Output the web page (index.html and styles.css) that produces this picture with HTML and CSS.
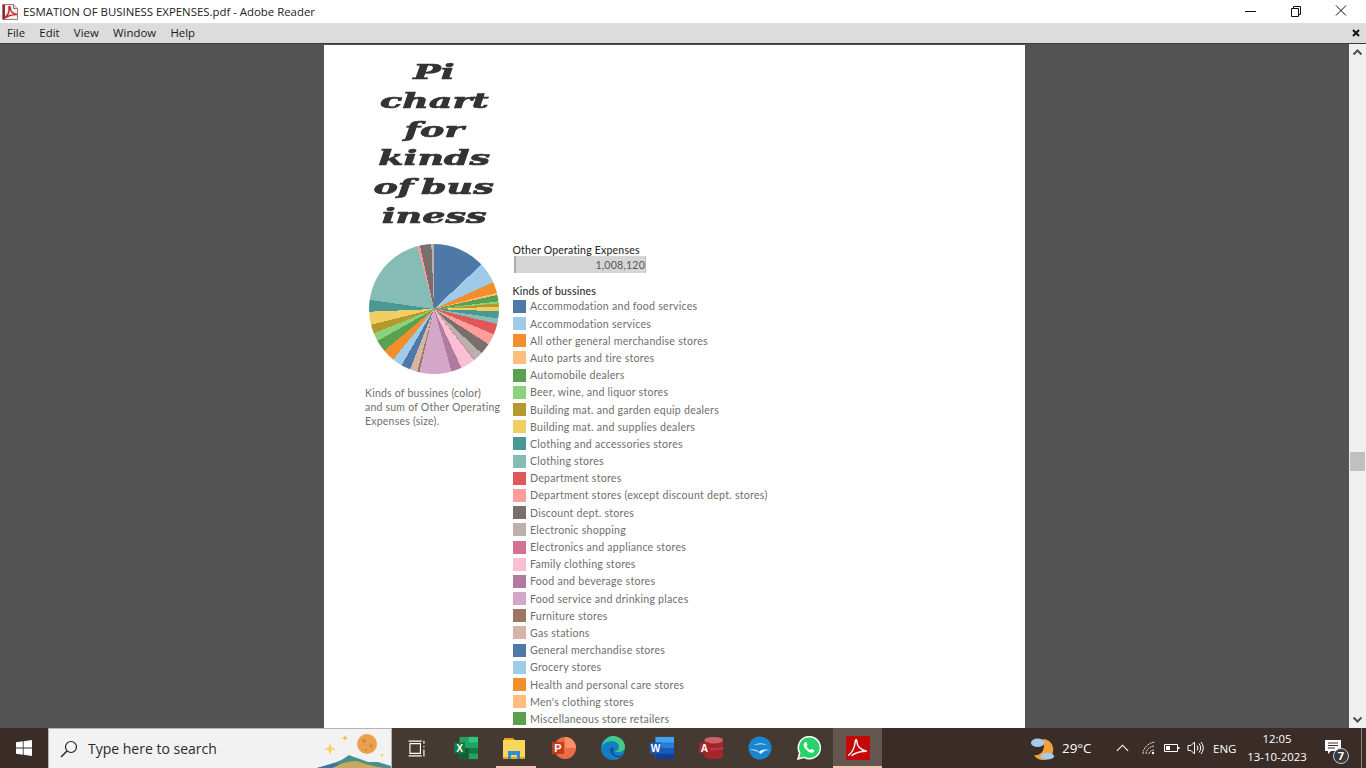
FILE: index.html
```html
<!DOCTYPE html>
<html lang="en">
<head>
<meta charset="utf-8">
<title>ESMATION OF BUSINESS EXPENSES.pdf - Adobe Reader</title>
<link rel="stylesheet" href="styles.css">
</head>
<body>
<div class="app">
  <header class="titlebar">
    <div class="title-left">
      <svg class="pdf-icon" viewBox="0 0 16 16"><path d="M.5 .5h11l4 4v11H.5z" fill="#f6eded" stroke="#9a7676"/><path d="M11.500 .5v4h4" fill="#ddd" stroke="#9a7676"/><path d="M1 1h2v14H1z" fill="#8e2a2a"/><path d="M2.500 14c3.500-2.500 5-6.500 4.500-10.500-.2-1.500 1.200-1.500 1.200 0 0 3.500 2.500 6.500 6.800 7-4-.3-8.500 1-12.500 3.500z" fill="none" stroke="#c32a28" stroke-width="1.500"/></svg>
      <span class="title-text">ESMATION OF BUSINESS EXPENSES.pdf - Adobe Reader</span>
    </div>
    <div class="win-controls">
      <svg class="win-btn" viewBox="0 0 46 23"><path d="M17 11.500h11" stroke="#111" fill="none"/></svg>
      <svg class="win-btn" viewBox="0 0 46 23"><path d="M17.500 8.500h7v8h-7zM19.500 8.500v-2h7v8h-2" stroke="#111" fill="none"/></svg>
      <svg class="win-btn" viewBox="0 0 46 23"><path d="M16 5.500l10 10M26 5.500l-10 10" stroke="#111" fill="none"/></svg>
    </div>
  </header>
  <nav class="menubar">
    <div class="menu-items">
      <span>File</span><span>Edit</span><span>View</span><span>Window</span><span>Help</span>
    </div>
    <svg class="menu-close" viewBox="0 0 8 8"><path d="M1 1l6 6M7 1l-6 6" stroke="#111" stroke-width="2" fill="none"/></svg>
  </nav>
  <main class="workspace">
    <div class="viewer">
      <article class="page">
        <div class="left-col">
          <h1 class="chart-title"><span>Pi</span><span>chart</span><span>for</span><span>kinds</span><span>of bus</span><span>iness</span></h1>
          <div class="pie"></div>
          <p class="pie-note">Kinds of bussines (color)<br>and sum of Other Operating<br>Expenses (size).</p>
        </div>
        <div class="right-col">
          <h2 class="legend-head">Other Operating Expenses</h2>
          <div class="size-bar">1,008,120</div>
          <h2 class="legend-head second">Kinds of bussines</h2>
          <ul class="legend">
            <li><i class="c1"></i>Accommodation and food services</li>
            <li><i class="c2"></i>Accommodation services</li>
            <li><i class="c3"></i>All other general merchandise stores</li>
            <li><i class="c4"></i>Auto parts and tire stores</li>
            <li><i class="c5"></i>Automobile dealers</li>
            <li><i class="c6"></i>Beer, wine, and liquor stores</li>
            <li><i class="c7"></i>Building mat. and garden equip dealers</li>
            <li><i class="c8"></i>Building mat. and supplies dealers</li>
            <li><i class="c9"></i>Clothing and accessories stores</li>
            <li><i class="c10"></i>Clothing stores</li>
            <li><i class="c11"></i>Department stores</li>
            <li><i class="c12"></i>Department stores (except discount dept. stores)</li>
            <li><i class="c13"></i>Discount dept. stores</li>
            <li><i class="c14"></i>Electronic shopping</li>
            <li><i class="c15"></i>Electronics and appliance stores</li>
            <li><i class="c16"></i>Family clothing stores</li>
            <li><i class="c17"></i>Food and beverage stores</li>
            <li><i class="c18"></i>Food service and drinking places</li>
            <li><i class="c19"></i>Furniture stores</li>
            <li><i class="c20"></i>Gas stations</li>
            <li><i class="c1"></i>General merchandise stores</li>
            <li><i class="c2"></i>Grocery stores</li>
            <li><i class="c3"></i>Health and personal care stores</li>
            <li><i class="c4"></i>Men's clothing stores</li>
            <li><i class="c5"></i>Miscellaneous store retailers</li>
          </ul>
        </div>
      </article>
    </div>
    <aside class="scrollbar">
      <svg class="arrow" viewBox="0 0 17 17"><path d="M4.500 10.500l4-4 4 4" stroke="#505050" stroke-width="2" fill="none"/></svg>
      <div class="track"><div class="thumb"></div></div>
      <svg class="arrow" viewBox="0 0 17 17"><path d="M4.500 6.500l4 4 4-4" stroke="#505050" stroke-width="2" fill="none"/></svg>
    </aside>
  </main>
  <footer class="taskbar">
    <div class="start">
      <svg class="winlogo" viewBox="0 0 16 16"><path d="M0 2.300l6.800-1v6.300H0zM7.600 1.200L16 0v7.600H7.600zM0 8.400h6.800v6.300l-6.800-1zM7.600 8.400H16V16l-8.400-1.200z" fill="#fff"/></svg>
    </div>
    <div class="search">
      <svg class="search-icon" viewBox="0 0 18 18"><circle cx="11" cy="7" r="5.500" fill="none" stroke="#222" stroke-width="1.200"/><path d="M7 11l-6 6" stroke="#222" stroke-width="1.400"/></svg>
      <span class="search-text">Type here to search</span>
      <svg class="search-art" viewBox="0 0 75 40"><path d="M1 40C10 37 20 35 27 31L33 27L38 29L44 31L52 34L62 34L75 38V40z" fill="#4a8f8c"/><path d="M1 40C8 38 14 37 20 35L30 40z" fill="#3f6fa8"/><path d="M16 40C24 36 32 33 40 33C50 36 56 38 68 40z" fill="#c9a860"/><circle cx="51" cy="16" r="10" fill="#eca04e"/><circle cx="48" cy="13" r="2" fill="#d4873c"/><circle cx="55" cy="18" r="1.800" fill="#d4873c"/><circle cx="50" cy="22" r="1.300" fill="#d4873c"/><path d="M14 15l1.500 4.500 4.500 1.500-4.500 1.500-1.500 4.500-1.500-4.500-4.500-1.500 4.500-1.500z" fill="#f6d365"/><path d="M29 7l.9 2.100 2.100.9-2.100.9-.9 2.100-.9-2.100-2.100-.9 2.100-.9z" fill="#f6c14a"/><circle cx="66" cy="27" r="1.200" fill="#f6cf5a"/></svg>
    </div>
    <div class="tasks">
      <div class="task"><svg class="ticon tv" viewBox="0 0 24 24"><path d="M4.500 6.500h12v11h-12zM3 3.500h15M3 20.500h15M20.500 3v3.500M20.500 9v1.500M20.500 13v8" fill="none" stroke="#fff" stroke-width="1.300"/></svg></div>
      <div class="task"><svg class="ticon" viewBox="0 0 26 24"><path d="M6 0h20v24H6z" fill="#21a366"/><path d="M16 0h10v6H16z" fill="#33c481"/><path d="M16 12h10v6H16z" fill="#107c41"/><path d="M6 12h10v12H6z" fill="#185c37"/><path d="M0 6h12v12H0z" fill="#107c41"/><text class="tletter" x="6" y="16">X</text></svg></div>
      <div class="task open"><svg class="ticon" viewBox="0 0 24 22"><path d="M1 1h9l2 2h-11z" fill="#e8a317"/><path d="M0 3h22v19H0z" fill="#f9d65c"/><path d="M0 20h22v2H0z" fill="#e8a317"/><path d="M5 14h12v8h-3v-4H8v4H5z" fill="#2a8fd8"/></svg></div>
      <div class="task"><svg class="ticon" viewBox="0 0 24 22"><circle cx="13" cy="11" r="11" fill="#ed6c47"/><path d="M13 0a11 11 0 0 1 11 11H13z" fill="#ff8f6b"/><path d="M0 5h12v12H0z" fill="#c43e1c"/><text class="tletter" x="6" y="15">P</text></svg></div>
      <div class="task"><svg class="ticon" viewBox="0 0 24 24"><circle cx="12" cy="12" r="12" fill="#0f7fc6"/><path d="M1 10C3 3 8 0 12 0c7 0 12 5 12 11 0 3-3 5-7 5-2 0-3-.5-3-1 2 0 4-1 4-4 0-3-3-6-7-6-5 0-8 3-10 5z" fill="#43c88a"/><path d="M9 13c0 5 4 9 10 8l2-2c-5 2-8 0-9-3 0-2 0-3 1-4-2-1-4 0-4 1z" fill="#1c4a8c"/></svg></div>
      <div class="task"><svg class="ticon" viewBox="0 0 26 24"><path d="M6 0h20v24H6z" fill="#2b7cd3"/><path d="M6 0h20v6H6z" fill="#41a5ee"/><path d="M6 12h20v6H6z" fill="#185abd"/><path d="M6 18h20v6H6z" fill="#103f91"/><path d="M0 6h12v12H0z" fill="#185abd"/><text class="tletter" x="6" y="16">W</text></svg></div>
      <div class="task"><svg class="ticon" viewBox="0 0 26 24"><path d="M6 3c0-4 20-4 20 0v18c0 4-20 4-20 0z" fill="#a4262c"/><ellipse cx="16" cy="3.500" rx="10" ry="3.500" fill="#c8636a"/><path d="M6 11c5 2 15 2 20 0v2c-5 2-15 2-20 0z" fill="#c43a43"/><path d="M0 6h12v12H0z" fill="#a4262c"/><text class="tletter" x="6" y="16">A</text></svg></div>
      <div class="task"><svg class="ticon" viewBox="0 0 24 24"><circle cx="12" cy="12" r="11.500" fill="#1a86d0"/><path d="M2 14c4-1 7 0 9 2 3-3 7-3 11-2-4 0-7 1-9 4-2-2-6-4-11-4z" fill="#fff"/><path d="M6 9c3-2 9-2 13 0-4-1-9-1-13 0z" fill="#fff"/></svg></div>
      <div class="task"><svg class="ticon" viewBox="0 0 24 24"><path d="M1 23l1.700-6A11 11 0 1 1 7 21.300z" fill="#25d366" stroke="#fff" stroke-width="1.500"/><path d="M8 6.500c-2 1.500-1.500 4 .5 6.500 2.500 3 5.500 4.500 7.500 3.500 1.500-.8 1.500-2.200 1-2.500l-2.500-1.200-1 1.200c-1.500-.5-3.500-2.500-4-4l1-1-1-2.700c-.5-.5-1.200-.5-1.500-.3z" fill="#fff"/></svg></div>
      <div class="task active"><svg class="ticon" viewBox="0 0 22 22"><path d="M0 0h22v22H0z" fill="#c4090b"/><path d="M2 18c4-3 6-8 6.500-13 .2-2 1.500-2 1.500 0 0 4 3 8 9 9-5 0-10 1-14 4" fill="none" stroke="#fff" stroke-width="1.300"/></svg></div>
    </div>
    <div class="tray">
      <svg class="weather" viewBox="0 0 26 26"><path d="M13 3a11 11 0 1 1-9 17c9 1 13-8 9-17z" fill="#f0a23a"/><ellipse cx="8" cy="7" rx="7" ry="4.500" fill="#a9c9ea"/><ellipse cx="18" cy="21" rx="7" ry="3.500" fill="#a9c9ea"/></svg>
      <span class="temp">29°C</span>
      <svg class="chev" viewBox="0 0 14 8"><path d="M1 7l6-6 6 6" fill="none" stroke="#fff" stroke-width="1.200"/></svg>
      <svg class="wifi" viewBox="0 0 14 14"><path d="M1 13C1 7 6 2 13 1M4 13c0-4 3-7 8-8M7 13c0-2 2-4 5-4" fill="none" stroke="#d8d8d8" stroke-dasharray="2 .6"/><circle cx="11" cy="12" r="1.200" fill="#fff"/></svg>
      <svg class="batt" viewBox="0 0 16 10"><path d="M.5 1.500h13v7H.5z" fill="none" stroke="#fff"/><path d="M2 3h4v4H2z" fill="#fff"/><path d="M14 4h1.500v2H14z" fill="#fff"/></svg>
      <svg class="vol" viewBox="0 0 17 14"><path d="M1 4.500h3l3.500-3.500v12L4 9.500H1z" fill="none" stroke="#fff"/><path d="M10 4.500a4 4 0 0 1 0 5M12 2.500a7 7 0 0 1 0 9M14 1a9 9 0 0 1 0 12" fill="none" stroke="#fff"/></svg>
      <span class="lang">ENG</span>
      <div class="clock"><span>12:05</span><span>13-10-2023</span></div>
      <div class="notify">
        <svg class="note-ic" viewBox="0 0 16 16"><path d="M0 0h16v11H6l-3 3v-3H0z" fill="#fff"/><path d="M3 3h10M3 5.500h10M3 8h7" stroke="#3a2e28"/></svg>
        <span class="badge">7</span>
      </div>
    </div>
  </footer>
</div>
</body>
</html>
```
FILE: styles.css
```css
* { box-sizing: border-box; }
html, body { margin: 0; padding: 0; height: 100%; overflow: hidden; }
body { font-family: "Open Sans", "Liberation Sans", sans-serif; }
.app { width: 1366px; height: 768px; display: flex; flex-direction: column; }

.titlebar { height: 23px; background: #fff; display: flex; justify-content: space-between; align-items: center; flex: none; }
.title-left { display: flex; align-items: center; padding-left: 2px; gap: 5px; }
.pdf-icon { width: 16px; height: 16px; }
.title-text { font-size: 11.4px; color: #222; }
.win-controls { display: flex; }
.win-btn { width: 46px; height: 23px; }

.menubar { height: 21px; background: #dcdcdc; border-bottom: 1px solid #3a3a3a; display: flex; justify-content: space-between; align-items: center; flex: none; }
.menu-items { display: flex; gap: 14.3px; padding: 0 0 2px 7px; font-size: 11.4px; color: #1a1a1a; }
.menu-close { width: 8px; height: 8px; margin-right: 6px; }

.workspace { flex: 1; min-height: 0; display: flex; }
.viewer { flex: 1; background: #535353; display: flex; justify-content: center; overflow: hidden; padding-top: 1px; }
.page { width: 701px; background: #fff; display: flex; padding-left: 41px; font-family: Lato, "Open Sans", sans-serif; overflow: hidden; }

.left-col { width: 148px; flex: none; }
.chart-title { margin: 13px 0 0; width: 138px; display: flex; flex-direction: column; align-items: center; font-family: "DejaVu Serif", serif; font-weight: 700; font-style: italic; font-size: 21px; line-height: 28.8px; word-spacing: -3px; color: #333; }
.chart-title span { display: block; transform: scaleX(1.74); white-space: nowrap; -webkit-text-stroke: 0.7px #333; }
.pie { width: 130px; height: 130px; margin: 13px 0 0 4px; border-radius: 50%; filter: blur(0.35px);
  background: conic-gradient(
    #4e79a7 0 46.7deg, #a0cbe8 0 65.6deg, #f28e2b 0 75.4deg, #ffbe7d 0 77.5deg, #59a14f 0 83.2deg,
    #8cd17d 0 85deg, #b6992d 0 88deg, #f1ce63 0 92deg, #499894 0 98.3deg, #86bcb6 0 103.3deg,
    #e15759 0 113deg, #ff9d9a 0 122.9deg, #79706e 0 133deg, #bab0ac 0 141deg, #d37295 0 141.8deg,
    #fabfd2 0 155deg, #b07aa1 0 164.3deg, #d4a6c8 0 193deg, #9d7660 0 195deg, #d7b5a6 0 201.7deg,
    #4e79a7 0 210deg, #a0cbe8 0 219deg, #f28e2b 0 230deg, #59a14f 0 240.5deg, #8cd17d 0 248deg,
    #b6992d 0 256deg, #f1ce63 0 267.6deg, #499894 0 278deg, #86bcb6 0 345deg, #ff9d9a 0 347.5deg,
    #79706e 0 357.6deg, #bab0ac 0 360deg); }
.pie-note { margin: 12px 0 0; font-size: 10.5px; line-height: 14.3px; color: #6e6e6e; letter-spacing: 0.22px; white-space: nowrap; }

.right-col { padding-top: 199.5px; flex: none; width: 400px; }
.legend-head { margin: 0 0 0 -0.5px; font-size: 10.5px; line-height: 11px; font-weight: 400; color: #2b2b2b; letter-spacing: 0.22px; -webkit-text-stroke: 0.1px #2b2b2b; }
.legend-head.second { margin-top: 12.5px; }
.size-bar { width: 132px; height: 17px; margin: 0.5px 0 0 1px; background: #d6d6d6; border-left: 2px solid #aaa; border-right: 1px solid #bbb; font-size: 10.6px; line-height: 19px; text-align: right; color: #555; letter-spacing: 0.2px; white-space: nowrap; }
.legend { list-style: none; margin: 1.3px 0 0; padding: 0; }
.legend li { height: 17.2px; display: flex; align-items: center; gap: 4px; font-size: 10.6px; color: #6e6e6e; letter-spacing: 0.25px; white-space: nowrap; }
.legend i { width: 13px; height: 13px; flex: none; }
.c1 { background: #4e79a7; } .c2 { background: #a0cbe8; } .c3 { background: #f28e2b; } .c4 { background: #ffbe7d; }
.c5 { background: #59a14f; } .c6 { background: #8cd17d; } .c7 { background: #b6992d; } .c8 { background: #f1ce63; }
.c9 { background: #499894; } .c10 { background: #86bcb6; } .c11 { background: #e15759; } .c12 { background: #ff9d9a; }
.c13 { background: #79706e; } .c14 { background: #bab0ac; } .c15 { background: #d37295; } .c16 { background: #fabfd2; }
.c17 { background: #b07aa1; } .c18 { background: #d4a6c8; } .c19 { background: #9d7660; } .c20 { background: #d7b5a6; }

.scrollbar { width: 17px; background: #f0f0f0; display: flex; flex-direction: column; flex: none; }
.arrow { width: 17px; height: 17px; flex: none; }
.track { flex: 1; padding-top: 391px; }
.thumb { width: 15px; height: 19px; margin-left: 1px; background: #c0c0c0; }

.taskbar { height: 40px; flex: none; background: #3a2c26; display: flex; align-items: stretch; color: #fff; }
.start { width: 48px; display: flex; align-items: center; justify-content: center; }
.winlogo { width: 16px; height: 16px; }
.search { width: 344px; background: #f2f2f2; border: 1px solid #b4b4b4; border-bottom: 0; display: flex; align-items: center; position: relative; }
.search-icon { width: 18px; height: 18px; margin-left: 11px; }
.search-text { margin-left: 10px; font-size: 14px; color: #2a2a2a; }
.search-art { position: absolute; right: 0; bottom: 0; width: 75px; height: 40px; }
.tasks { display: flex; flex: none; background: #453a32; }
.task { width: 49px; position: relative; display: flex; align-items: center; justify-content: center; }
.task.open::after, .task.active::after { content: ""; position: absolute; left: 6px; right: 3px; bottom: 0; height: 2px; background: #f7c5b5; }
.task.active { background: #645750; }
.task.active::after { left: 0; right: 0; }
.ticon { width: 24px; height: 24px; }
.ticon.tv { width: 21px; height: 21px; }
.tletter { font-family: "Liberation Sans", sans-serif; font-weight: 700; font-size: 11px; fill: #fff; text-anchor: middle; }
.tray { margin-left: auto; display: flex; align-items: center; padding-right: 4px; }
.weather { width: 25px; height: 25px; flex: none; }
.temp { margin-left: 7px; font-size: 13.4px; width: 54px; flex: none; }
.chev { width: 13px; height: 8px; flex: none; }
.wifi { width: 14px; height: 14px; margin-left: 13px; flex: none; }
.batt { width: 16px; height: 10px; margin-left: 8px; flex: none; }
.vol { width: 17px; height: 14px; margin-left: 7px; flex: none; }
.lang { margin-left: 9px; font-size: 11.5px; width: 29px; flex: none; }
.clock { display: flex; flex-direction: column; align-items: center; font-size: 11.4px; line-height: 18px; width: 70px; margin-right: 13px; flex: none; }
.notify { width: 37px; height: 40px; position: relative; border-right: 1px solid #8a7f7a; flex: none; }
.note-ic { position: absolute; left: 0; top: 12px; width: 16px; height: 16px; }
.badge { position: absolute; left: 8px; top: 20px; width: 16px; height: 16px; border-radius: 50%; background: #3a3a3a; border: 1px solid #ccc; font-size: 11px; line-height: 14px; text-align: center; font-weight: 700; }
```
